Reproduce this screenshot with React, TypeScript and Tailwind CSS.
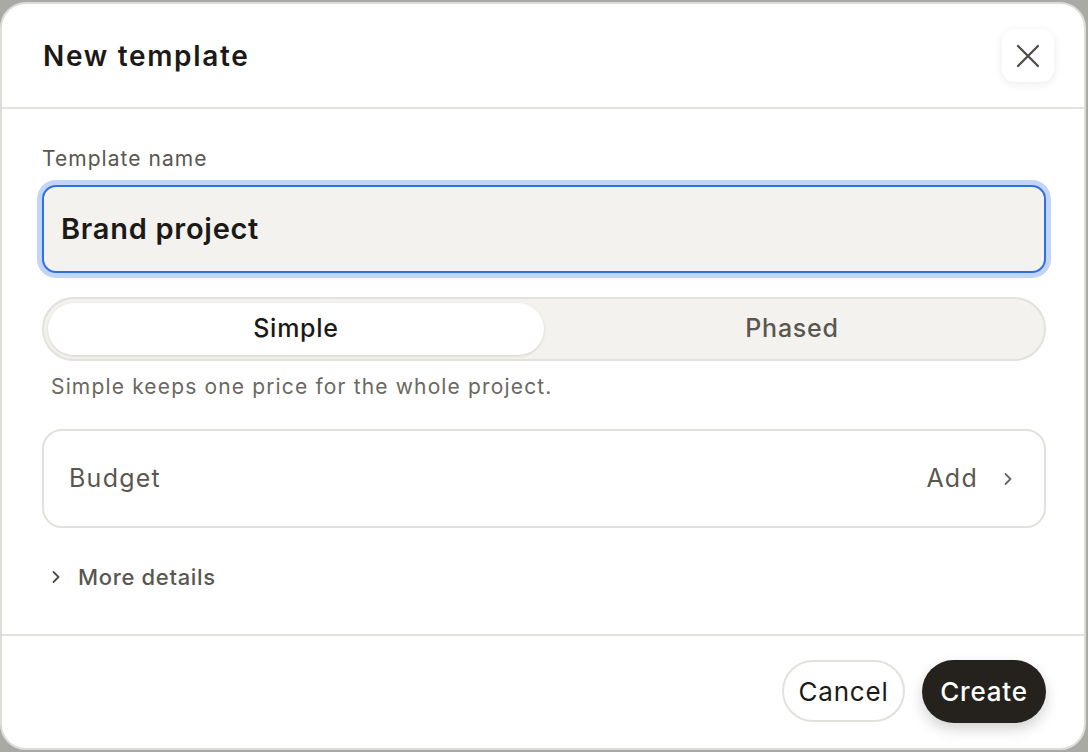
import React from "react";

const font = { fontFamily: "Inter, 'Noto Sans', sans-serif" };

function Chevron({ className }: { className?: string }) {
  return (
    <svg viewBox="0 0 12 16" className={className} fill="none" stroke="currentColor" strokeWidth={1.8} strokeLinecap="round" strokeLinejoin="round">
      <path d="M3.5 3 L8.5 8 L3.5 13" />
    </svg>
  );
}

export default function App() {
  return (
    <div className="w-[1088px] h-[752px] bg-[#a9a9a5] pt-[2px]" style={font}>
      <div className="w-[1086px] h-[748px] bg-white border-2 border-[#dddcd7] rounded-[26px] flex flex-col overflow-hidden">
        {/* header */}
        <div className="h-[105px] flex items-center justify-between pl-[41px] pr-[30px] border-b-2 border-[#e3e2dd]">
          <h1 className="text-[28px] font-semibold text-[#1c1a17] tracking-[0.06em]">New template</h1>
          <button className="w-[52px] h-[53px] rounded-[13px] bg-white shadow-[0_2px_10px_rgba(0,0,0,0.08)] flex items-center justify-center text-[#4d4a44]">
            <svg viewBox="0 0 24 24" className="w-[24px] h-[24px]" fill="none" stroke="currentColor" strokeWidth={2.2} strokeLinecap="round">
              <path d="M2 2 L22 22 M22 2 L2 22" />
            </svg>
          </button>
        </div>

        {/* body */}
        <div className="flex-1 flex flex-col pt-[36px] pl-[40px] pr-[38px]">
          <label className="text-[21px] leading-[28px] text-[#5a5750] tracking-[0.05em]">Template name</label>
          <div className="mt-[12px] h-[88px] rounded-[14px] border-2 border-[#2f6fe6] bg-[#f3f2ef] ring-[5px] ring-[#c2d5f7] flex items-center pl-[17px]">
            <span className="text-[29px] font-semibold text-[#1c1a17] tracking-[0.025em]">Brand project</span>
          </div>

          <div className="mt-[24px] h-[64px] rounded-full border-2 border-[#e2e1dc] bg-[#f3f2ef] p-[4px] grid grid-cols-2">
            <div className="rounded-full bg-white shadow-[0_1px_3px_rgba(0,0,0,0.14)] flex items-center justify-center text-[25px] font-medium text-[#1c1a17] tracking-[0.03em]">
              Simple
            </div>
            <div className="flex items-center justify-center text-[25px] font-medium text-[#5a5750] tracking-[0.03em]">Phased</div>
          </div>

          <p className="mt-[12px] pl-[9px] text-[21px] leading-[28px] text-[#6b6862] tracking-[0.055em]">
            Simple keeps one price for the whole project.
          </p>

          <div className="mt-[28px] h-[99px] rounded-[20px] border-2 border-[#e2e1dc] flex items-center justify-between pl-[25px] pr-[30px]">
            <span className="text-[25px] text-[#5a5750] tracking-[0.05em]">Budget</span>
            <div className="flex items-center gap-[24px] text-[#5a5750]">
              <span className="text-[25px] tracking-[0.05em]">Add</span>
              <Chevron className="w-[12px] h-[16px] text-[#6b6862]" />
            </div>
          </div>

          <div className="mt-[33px] flex items-center gap-[16px] pl-[8px] text-[#5a5750]">
            <Chevron className="w-[12px] h-[16px] text-[#4d4a44]" />
            <span className="text-[22px] leading-[32px] font-medium tracking-[0.03em]">More details</span>
          </div>
        </div>

        {/* footer */}
        <div className="h-[114px] border-t-2 border-[#e3e2dd] flex items-center justify-end gap-[17px] pr-[38px] pb-[2px]">
          <button className="h-[62px] w-[123px] rounded-full border-2 border-[#e2e1dc] bg-white text-[26px] text-[#1c1a17] tracking-[0.03em]">
            Cancel
          </button>
          <button className="h-[63px] w-[124px] rounded-full bg-[#25221e] text-[26px] font-medium text-white tracking-[0.03em] shadow-[0_6px_14px_rgba(0,0,0,0.18)]">
            Create
          </button>
        </div>
      </div>
    </div>
  );
}
